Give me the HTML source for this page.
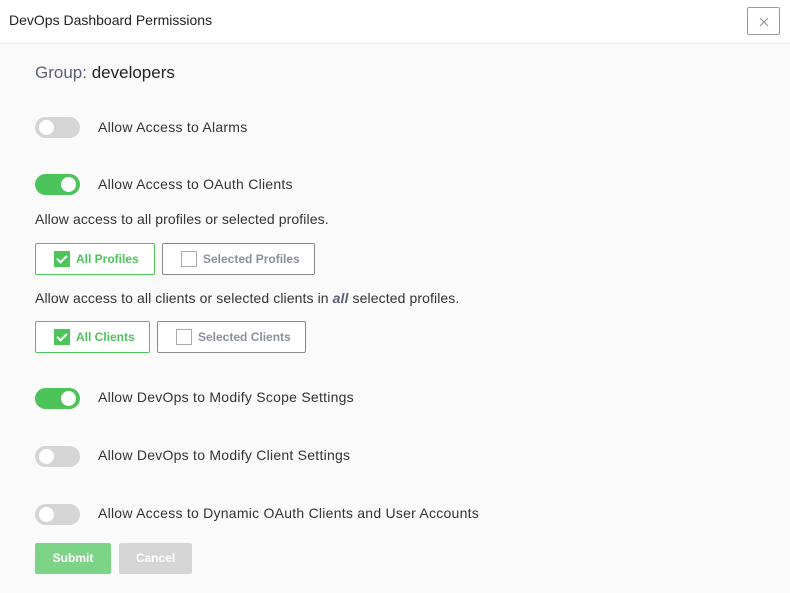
<!DOCTYPE html>
<html><head><style>
*{box-sizing:border-box;margin:0;padding:0}
body{width:790px;height:593px;background:#fafafa;font-family:"Liberation Sans",sans-serif;position:relative;overflow:hidden;color:#333}
.hdr{position:absolute;left:0;top:0;width:790px;height:44px;background:#fff;border-bottom:1px solid #e8e8e8}
.hdr .t{position:absolute;left:9px;top:12px;font-size:14px;color:#222}
.x{position:absolute;left:747px;top:7px;width:33px;height:28px;border:1px solid #999;border-radius:2px;background:#fff}
.x svg{position:absolute;left:11px;top:9px}
.a{position:absolute}
.tg{position:absolute;left:35px;width:45px;height:21px;border-radius:11px;background:#d5d5d5}
.tg::after{content:"";position:absolute;top:3px;left:4px;width:15px;height:15px;border-radius:50%;background:#fff}
.tg.on{background:#4cc45a}
.tg.on::after{left:26px}
.lb{position:absolute;left:98px;font-size:14px;color:#333;letter-spacing:0.25px}
.btn{position:absolute;height:32px;border:1px solid #888;border-radius:2px;background:#fff;font-size:12px;color:#8a8f9e;font-weight:bold;padding-left:40px;line-height:30px}
.btn.on{border-color:#4cc45a;color:#4cc45a}
.btn i{position:absolute;left:18px;top:7px;width:16px;height:16px;border:1px solid #aaa}
.btn.on i{background:#4cc45a;border-color:#4cc45a}
.btn.on i::after{content:"";position:absolute;left:4px;top:1px;width:4px;height:8px;border:solid #fff;border-width:0 2px 2px 0;transform:rotate(45deg)}
.p{position:absolute;left:35px;font-size:14px;color:#333;letter-spacing:0.1px}
.sb{position:absolute;top:543px;height:31px;border-radius:2px;color:#fff;font-weight:bold;font-size:12px;text-align:center;line-height:31px}
</style></head><body>
<div class="hdr"><div class="t">DevOps Dashboard Permissions</div><div class="x"><svg width="10" height="10" viewBox="0 0 10 10"><path d="M1 1L9 9M9 1L1 9" stroke="#999" stroke-width="1.2"/></svg></div></div>
<div class="a" style="left:35px;top:63px;font-size:17px;color:#222"><span style="color:#5a6178">Group:</span> developers</div>
<div class="tg" style="top:117px"></div><div class="lb" style="top:119px">Allow Access to Alarms</div>
<div class="tg on" style="top:174px"></div><div class="lb" style="top:176px">Allow Access to OAuth Clients</div>
<div class="p" style="top:211px">Allow access to all profiles or selected profiles.</div>
<div class="btn on" style="left:35px;top:243px;width:120px"><i></i>All Profiles</div>
<div class="btn" style="left:162px;top:243px;width:153px"><i></i>Selected Profiles</div>
<div class="p" style="top:290px">Allow access to all clients or selected clients in <i style="color:#5a6178;font-weight:bold">all</i> selected profiles.</div>
<div class="btn on" style="left:35px;top:321px;width:115px"><i></i>All Clients</div>
<div class="btn" style="left:157px;top:321px;width:149px"><i></i>Selected Clients</div>
<div class="tg on" style="top:388px"></div><div class="lb" style="top:389px">Allow DevOps to Modify Scope Settings</div>
<div class="tg" style="top:446px"></div><div class="lb" style="top:447px">Allow DevOps to Modify Client Settings</div>
<div class="tg" style="top:504px"></div><div class="lb" style="top:505px">Allow Access to Dynamic OAuth Clients and User Accounts</div>
<div class="sb" style="left:35px;width:76px;background:#7dd386">Submit</div>
<div class="sb" style="left:119px;width:73px;background:#d5d5d5">Cancel</div>
</body></html>
